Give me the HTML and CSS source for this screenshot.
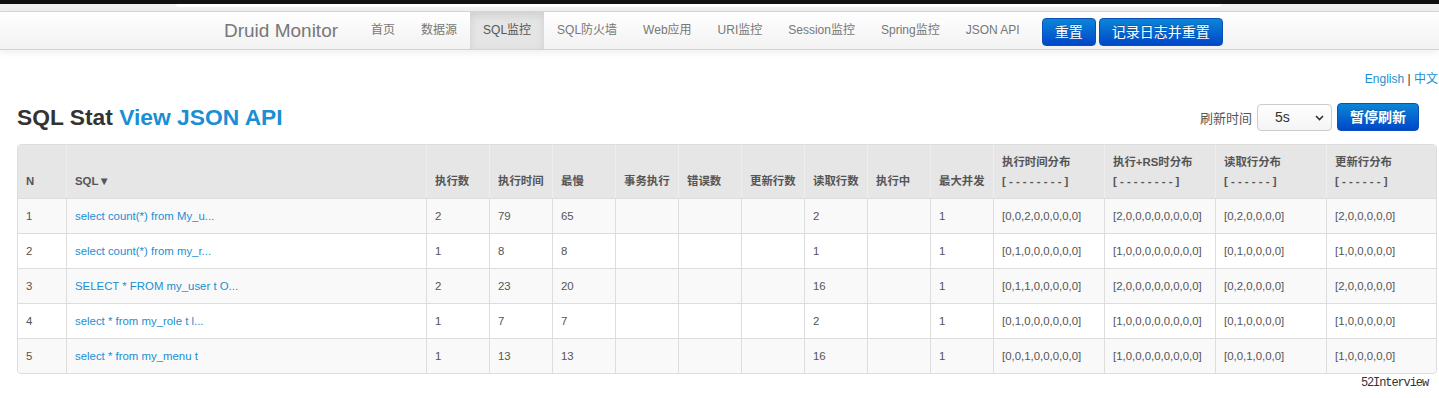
FILE: index.html
```html
<!DOCTYPE html>
<html lang="zh-CN">
<head>
    <meta charset="UTF-8">
    <title>Druid Stat Index</title>
    <link rel="stylesheet" href="styles.css">
</head>
<body>
    <div class="window-top"></div>
    <div class="tab-strip"><div class="tab-edge"></div></div>

    <div class="navbar">
        <div class="nav-inner">
            <a href="#" class="brand">Druid Monitor</a>
            <ul class="nav">
                <li><a href="#">首页</a></li>
                <li><a href="#">数据源</a></li>
                <li class="active"><a href="#">SQL监控</a></li>
                <li><a href="#">SQL防火墙</a></li>
                <li><a href="#">Web应用</a></li>
                <li><a href="#">URI监控</a></li>
                <li><a href="#">Session监控</a></li>
                <li><a href="#">Spring监控</a></li>
                <li><a href="#">JSON API</a></li>
            </ul>
            <div class="nav-actions">
                <button class="btn btn-primary">重置</button>
                <button class="btn btn-primary">记录日志并重置</button>
            </div>
        </div>
    </div>

    <div class="main">
        <div class="lang"><a href="#">English</a> | <a href="#">中文</a></div>

        <div class="title-row">
            <h3>SQL Stat <a href="#">View JSON API</a></h3>
            <div class="refresh">
                <span class="refresh-label">刷新时间</span>
                <div class="select-wrap">
                    <select class="refresh-select">
                        <option>5s</option>
                        <option>10s</option>
                        <option>20s</option>
                        <option>30s</option>
                        <option>1min</option>
                    </select>
                    <svg class="chevron" width="9" height="6" viewBox="0 0 9 6"><path d="M1 1l3.5 3.5L8 1" fill="none" stroke="#333" stroke-width="1.6"/></svg>
                </div>
                <button class="btn btn-primary btn-bold">暂停刷新</button>
            </div>
        </div>

        <table class="stat-table">
            <thead>
                <tr>
                    <th class="col-n">N</th>
                    <th>SQL▼</th>
                    <th class="col-num">执行数</th>
                    <th class="col-num">执行时间</th>
                    <th class="col-num">最慢</th>
                    <th class="col-num">事务执行</th>
                    <th class="col-num">错误数</th>
                    <th class="col-num">更新行数</th>
                    <th class="col-num">读取行数</th>
                    <th class="col-num">执行中</th>
                    <th class="col-num">最大并发</th>
                    <th class="col-dist">执行时间分布<br>[ - - - - - - - - ]</th>
                    <th class="col-dist">执行+RS时分布<br>[ - - - - - - - - ]</th>
                    <th class="col-dist">读取行分布<br>[ - - - - - - ]</th>
                    <th class="col-dist last">更新行分布<br>[ - - - - - - ]</th>
                </tr>
            </thead>
            <tbody>
                <tr>
                    <td>1</td>
                    <td><a href="#">select count(*) from My_u...</a></td>
                    <td>2</td><td>79</td><td>65</td><td></td><td></td><td></td><td>2</td><td></td><td>1</td>
                    <td>[0,0,2,0,0,0,0,0]</td><td>[2,0,0,0,0,0,0,0,0]</td><td>[0,2,0,0,0,0]</td><td>[2,0,0,0,0,0]</td>
                </tr>
                <tr>
                    <td>2</td>
                    <td><a href="#">select count(*) from my_r...</a></td>
                    <td>1</td><td>8</td><td>8</td><td></td><td></td><td></td><td>1</td><td></td><td>1</td>
                    <td>[0,1,0,0,0,0,0,0]</td><td>[1,0,0,0,0,0,0,0,0]</td><td>[0,1,0,0,0,0]</td><td>[1,0,0,0,0,0]</td>
                </tr>
                <tr>
                    <td>3</td>
                    <td><a href="#">SELECT * FROM my_user t O...</a></td>
                    <td>2</td><td>23</td><td>20</td><td></td><td></td><td></td><td>16</td><td></td><td>1</td>
                    <td>[0,1,1,0,0,0,0,0]</td><td>[2,0,0,0,0,0,0,0,0]</td><td>[0,2,0,0,0,0]</td><td>[2,0,0,0,0,0]</td>
                </tr>
                <tr>
                    <td>4</td>
                    <td><a href="#">select * from my_role t l...</a></td>
                    <td>1</td><td>7</td><td>7</td><td></td><td></td><td></td><td>2</td><td></td><td>1</td>
                    <td>[0,1,0,0,0,0,0,0]</td><td>[1,0,0,0,0,0,0,0,0]</td><td>[0,1,0,0,0,0]</td><td>[1,0,0,0,0,0]</td>
                </tr>
                <tr>
                    <td>5</td>
                    <td><a href="#">select * from my_menu t</a></td>
                    <td>1</td><td>13</td><td>13</td><td></td><td></td><td></td><td>16</td><td></td><td>1</td>
                    <td>[0,0,1,0,0,0,0,0]</td><td>[1,0,0,0,0,0,0,0,0]</td><td>[0,0,1,0,0,0]</td><td>[1,0,0,0,0,0]</td>
                </tr>
            </tbody>
        </table>

        <div class="watermark">52Interview</div>
    </div>
</body>
</html>
```

FILE: styles.css
```css
body {
    margin: 0;
    font-family: "Liberation Sans", "Noto Sans CJK SC", sans-serif;
    font-size: 12px;
    color: #333;
    background: #fff;
    overflow: hidden;
}
a {
    color: #1a8fd3;
    text-decoration: none;
}

/* strip left over from the browser window */
.window-top {
    height: 4px;
    background: #111;
}
.tab-strip {
    height: 7px;
    background: #f2f2f2;
}
.tab-edge {
    margin-left: 176px;
    width: 1045px;
    height: 3px;
    background: #fff;
    border-radius: 0 0 4px 4px;
}

/* top navbar */
.navbar {
    height: 37px;
    border-top: 1px solid #d4d4d4;
    border-bottom: 1px solid #d4d4d4;
    background: linear-gradient(to bottom, #ffffff, #f2f2f2);
    box-shadow: 0 2px 8px rgba(0, 0, 0, 0.08);
    position: relative;
}
.nav-inner {
    display: flex;
    height: 100%;
    padding-left: 224px;
}
.brand {
    font-size: 19px;
    color: #777;
    line-height: 37px;
    padding-right: 20px;
}
.nav {
    display: flex;
    list-style: none;
    margin: 0;
    padding: 0;
}
.nav li a {
    display: block;
    padding: 0 13px;
    line-height: 37px;
    font-size: 12px;
    color: #777;
}
.nav li.active a {
    background: #e5e5e5;
    color: #555;
    box-shadow: inset 0 3px 8px rgba(0, 0, 0, 0.1);
}
.nav-actions {
    display: flex;
    gap: 3px;
    margin-left: 9px;
    align-items: center;
    padding-top: 3px;
}
.btn {
    height: 28px;
    padding: 0 12px;
    font-family: inherit;
    font-size: 14px;
    line-height: 26px;
    border-radius: 4px;
    cursor: pointer;
}
.btn-primary {
    color: #fff;
    background: linear-gradient(to bottom, #0a86d6, #0047c9);
    border: 1px solid #0b4fb8;
    text-shadow: 0 -1px 0 rgba(0, 0, 0, 0.2);
}
.btn-bold {
    font-weight: bold;
}

/* page body */
.main {
    padding-left: 17px;
}
.lang {
    margin-top: 22px;
    margin-right: 1px;
    text-align: right;
    font-size: 12px;
    line-height: 14px;
    color: #333;
}
.title-row {
    display: flex;
    justify-content: space-between;
    align-items: center;
    margin-top: 17px;
    margin-right: 20px;
    height: 28px;
}
.title-row h3 {
    margin: 0;
    font-size: 22.8px;
    font-weight: bold;
    line-height: 28px;
    color: #333;
}
.refresh {
    display: flex;
    align-items: center;
}
.refresh-label {
    font-size: 13px;
    color: #555;
    margin-right: 5px;
}
.select-wrap {
    position: relative;
    margin-right: 5px;
}
.refresh-select {
    -webkit-appearance: none;
    appearance: none;
    width: 75px;
    height: 27px;
    padding: 0 0 0 17px;
    font-family: inherit;
    font-size: 14px;
    color: #333;
    background: linear-gradient(to bottom, #ffffff, #f4f4f4);
    border: 1px solid #ccc;
    border-radius: 4px;
    display: block;
}
.chevron {
    position: absolute;
    right: 8px;
    top: 11px;
    pointer-events: none;
}

/* stat table */
.stat-table {
    width: 1420px;
    margin-top: 13px;
    table-layout: fixed;
    border-collapse: separate;
    border-spacing: 0;
    border: 1px solid #ddd;
    border-radius: 4px;
    font-size: 11.4px;
}
.stat-table th,
.stat-table td {
    box-sizing: border-box;
    border-left: 1px solid #ddd;
    text-align: left;
    vertical-align: bottom;
    color: #555;
    white-space: nowrap;
}
.stat-table th:first-child,
.stat-table td:first-child {
    border-left: none;
}
.stat-table th {
    background: #e6e6e6;
    padding: 8px 8px 7px;
    line-height: 19px;
    font-weight: bold;
    border-left-color: #eee;
}
.stat-table td {
    padding: 8px;
    line-height: 18px;
    border-top: 1px solid #ddd;
    vertical-align: top;
}
.stat-table tbody tr:nth-child(odd) td {
    background: #f9f9f9;
}
.stat-table tbody tr:nth-child(even) td {
    background: #fff;
}
.stat-table thead th:first-child {
    border-top-left-radius: 4px;
}
.stat-table thead th:last-child {
    border-top-right-radius: 4px;
}
.stat-table tbody tr:last-child td:first-child {
    border-bottom-left-radius: 4px;
}
.stat-table tbody tr:last-child td:last-child {
    border-bottom-right-radius: 4px;
}
.col-n {
    width: 48px;
}
.col-num {
    width: 63px;
}
.col-dist {
    width: 111px;
}
.col-dist.last {
    width: 110px;
}

.watermark {
    text-align: right;
    padding-right: 11px;
    margin-top: 2px;
    font-family: "Liberation Mono", monospace;
    font-size: 12px;
    letter-spacing: -1.1px;
    line-height: 14px;
    color: #333;
}
```
